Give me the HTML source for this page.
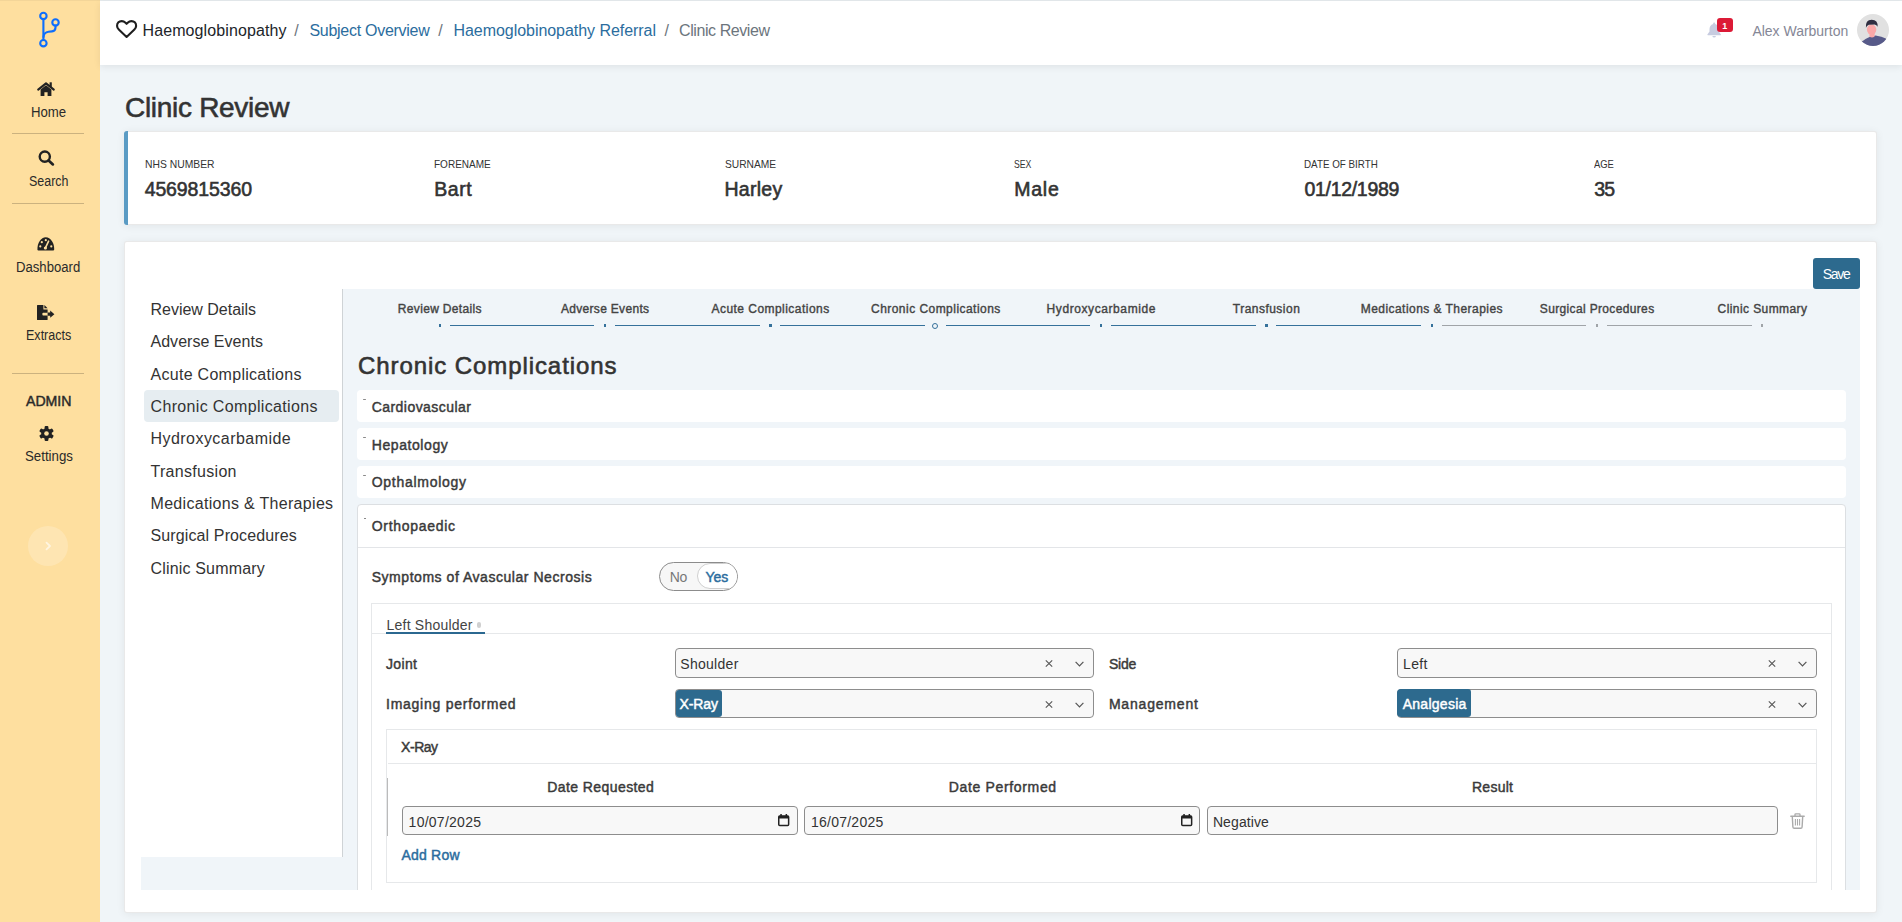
<!DOCTYPE html>
<html><head><meta charset="utf-8"><title>Clinic Review</title>
<style>
html,body{margin:0;padding:0;}
html{background:#f0f5f8;}
body{width:1902px;height:922px;overflow:hidden;position:relative;background:#f0f5f8;font-family:"Liberation Sans", sans-serif;}
.t{position:absolute;white-space:nowrap;}
svg{position:absolute;overflow:visible;}
</style></head><body>
<div style="position:absolute;left:0px;top:0px;width:100px;height:922px;background:#fedf9f"></div>
<div style="position:absolute;left:0px;top:0px;width:1902px;height:1px;background:rgba(0,0,0,0.045)"></div>
<svg style="left:20px;top:0px" width="60" height="60" viewBox="0 0 60 60">
<g fill="none" stroke="#0d6efd" stroke-width="2.1" stroke-linecap="round">
<circle cx="23.4" cy="15.9" r="3.2"/><circle cx="35.5" cy="22.4" r="3.2"/><circle cx="23.4" cy="43.2" r="3.2"/>
<path d="M23.4 19.1 V40"/><path d="M35.5 25.6 V27.5 Q35.5 31 32 31.4 L28.5 31.8 Q23.8 32.4 23.5 37"/>
</g></svg>
<svg style="left:37.3px;top:81.8px" width="18" height="14" viewBox="0 0 18 14">
<path d="M1.2 7.6 L9 1.4 L16.8 7.6" fill="none" stroke="#222222" stroke-width="2.1" stroke-linecap="round" stroke-linejoin="round"/>
<rect x="12.6" y="0.3" width="2.2" height="4.6" fill="#222222"/>
<path d="M3.6 7.4 L9 3.2 L14.4 7.4 V14 H10.6 V10.2 H7.4 V14 H3.6 Z" fill="#222222"/>
</svg>
<svg style="left:38px;top:150.2px" width="16.4" height="15.6" viewBox="0 0 16.4 15.6">
<circle cx="6.8" cy="6.6" r="5.1" fill="none" stroke="#222222" stroke-width="2.4"/>
<path d="M10.6 10.4 L14.9 14.4" stroke="#222222" stroke-width="2.7" stroke-linecap="round"/>
</svg>
<svg style="left:37.4px;top:237.4px" width="17.6" height="13.6" viewBox="0 0 17.6 13.6">
<path d="M0.4 12.6 C0.2 5.8 4 0.2 8.8 0.2 C13.6 0.2 17.4 5.8 17.2 12.6 Q17.1 13.5 16.2 13.5 H1.4 Q0.5 13.5 0.4 12.6 Z" fill="#222222"/>
<g fill="#fedf9f"><circle cx="3.3" cy="9.4" r="1.1"/><circle cx="4.8" cy="5.2" r="1.1"/><circle cx="8.8" cy="3.2" r="1.1"/><circle cx="14.3" cy="9.4" r="1.1"/></g>
<path d="M8.2 11.3 L11.6 4.2" stroke="#fedf9f" stroke-width="1.6" stroke-linecap="round"/>
<circle cx="8.4" cy="11" r="1.6" fill="#fedf9f"/>
</svg>
<svg style="left:37.4px;top:304.7px" width="17.6" height="15.1" viewBox="0 0 17.6 15.1">
<path d="M0 0.6 Q0 0 0.6 0 H6.4 V4.4 H10.6 V7.8 H6.2 Q5.4 7.8 5.4 8.6 V9.8 Q5.4 10.6 6.2 10.6 H10.6 V14.5 Q10.6 15.1 10 15.1 H0.6 Q0 15.1 0 14.5 Z" fill="#222222"/>
<path d="M7.4 0 L10.6 3.3 H7.4 Z" fill="#222222"/>
<path d="M10.6 7.6 H13.2 V5.6 L17.4 9.2 L13.2 12.8 V10.8 H10.6 Z" fill="#222222"/>
</svg>
<svg style="left:39px;top:426.3px" width="15" height="15" viewBox="-7.5 -7.5 15 15">
<g fill="#222222"><circle r="5.3"/>
<rect x="-1.9" y="-7.4" width="3.8" height="14.8" rx="1"/>
<rect x="-1.9" y="-7.4" width="3.8" height="14.8" rx="1" transform="rotate(60)"/>
<rect x="-1.9" y="-7.4" width="3.8" height="14.8" rx="1" transform="rotate(120)"/></g>
<circle r="2.3" fill="#fedf9f"/>
</svg>
<div class="t" style="left:30.90px;top:105.00px;font-size:14px;line-height:14px;font-weight:400;color:#2a2a2a;transform:scaleX(0.9422);transform-origin:0 0">Home</div>
<div class="t" style="left:28.60px;top:174.00px;font-size:14px;line-height:14px;font-weight:400;color:#2a2a2a;transform:scaleX(0.8882);transform-origin:0 0">Search</div>
<div class="t" style="left:16.30px;top:260.00px;font-size:14px;line-height:14px;font-weight:400;color:#2a2a2a;transform:scaleX(0.9372);transform-origin:0 0">Dashboard</div>
<div class="t" style="left:26.00px;top:328.00px;font-size:14px;line-height:14px;font-weight:400;color:#2a2a2a;transform:scaleX(0.8956);transform-origin:0 0">Extracts</div>
<div class="t" style="left:25.50px;top:394.00px;font-size:14px;line-height:14px;font-weight:400;color:#2a2a2a;-webkit-text-stroke:0.45px #2a2a2a;transform:scaleX(1.0083);transform-origin:0 0">ADMIN</div>
<div class="t" style="left:24.50px;top:449.00px;font-size:14px;line-height:14px;font-weight:400;color:#2a2a2a;transform:scaleX(0.9468);transform-origin:0 0">Settings</div>
<div style="position:absolute;left:12px;top:133px;width:72px;height:1px;background:rgba(0,0,0,0.2)"></div>
<div style="position:absolute;left:12px;top:203px;width:72px;height:1px;background:rgba(0,0,0,0.2)"></div>
<div style="position:absolute;left:12px;top:373px;width:72px;height:1px;background:rgba(0,0,0,0.2)"></div>
<div style="position:absolute;left:28.2px;top:525.8px;width:40px;height:40px;border-radius:50%;background:rgba(255,255,255,0.2)"></div>
<svg style="left:44px;top:541px" width="9" height="10" viewBox="0 0 9 10"><path d="M2.5 1.6 L6 5 L2.5 8.4" fill="none" stroke="rgba(255,255,255,0.6)" stroke-width="1.8" stroke-linecap="round" stroke-linejoin="round"/></svg>
<div style="position:absolute;left:100px;top:1px;width:1802px;height:64px;background:#fff;box-shadow:0 2px 7px rgba(0,0,0,0.075)"></div>
<svg style="left:116px;top:20px" width="21.2" height="18" viewBox="0 0 21.2 18">
<path d="M10.6 16.9 L2.8 9.6 C0.6 7.5 0.5 4.2 2.4 2.3 C4 0.7 7.4 0.6 9.2 2.4 L10.6 3.8 L12 2.4 C13.8 0.6 17.2 0.7 18.8 2.3 C20.7 4.2 20.6 7.5 18.4 9.6 Z" fill="none" stroke="#1e1e1e" stroke-width="2.1" stroke-linejoin="round"/>
</svg>
<div class="t" style="left:142.50px;top:23.00px;font-size:16px;line-height:16px;font-weight:400;color:#212529;letter-spacing:0.104px">Haemoglobinopathy</div>
<div class="t" style="left:294.20px;top:23.00px;font-size:16px;line-height:16px;font-weight:400;color:#6c757d">/</div>
<div class="t" style="left:309.40px;top:23.00px;font-size:16px;line-height:16px;font-weight:400;color:#2b6d9e;letter-spacing:-0.273px">Subject Overview</div>
<div class="t" style="left:438.30px;top:23.00px;font-size:16px;line-height:16px;font-weight:400;color:#6c757d">/</div>
<div class="t" style="left:453.50px;top:23.00px;font-size:16px;line-height:16px;font-weight:400;color:#2b6d9e;letter-spacing:-0.047px">Haemoglobinopathy Referral</div>
<div class="t" style="left:664.50px;top:23.00px;font-size:16px;line-height:16px;font-weight:400;color:#6c757d">/</div>
<div class="t" style="left:679.00px;top:23.00px;font-size:16px;line-height:16px;font-weight:400;color:#6c757d;letter-spacing:-0.419px">Clinic Review</div>
<svg style="left:1707.4px;top:22.1px" width="14.3" height="15.7" viewBox="0 0 14.3 15.7">
<path d="M7.15 0.6 C7.9 0.6 8.2 1.2 8.2 1.9 C10.6 2.5 11.8 4.6 11.8 7.2 V9.6 L13.9 12.4 Q14.2 13.1 13.4 13.2 H0.9 Q0.1 13.1 0.4 12.4 L2.5 9.6 V7.2 C2.5 4.6 3.7 2.5 6.1 1.9 C6.1 1.2 6.4 0.6 7.15 0.6 Z" fill="#c7cce0"/>
<path d="M5.3 14 H9 Q8.6 15.6 7.15 15.6 Q5.7 15.6 5.3 14 Z" fill="#c7cce0"/>
</svg>
<div style="position:absolute;left:1716.7px;top:18.2px;width:16px;height:13.7px;background:#dc1a36;border-radius:3px"></div>
<div class="t" style="left:1722.19px;top:22.00px;font-size:9px;line-height:9px;font-weight:700;color:#fff">1</div>
<div class="t" style="left:1752.40px;top:24.00px;font-size:14px;line-height:14px;font-weight:400;color:#858796;letter-spacing:-0.013px">Alex Warburton</div>
<svg style="left:1857px;top:14.2px" width="32" height="32" viewBox="0 0 32 32">
<defs><clipPath id="av"><circle cx="16" cy="16" r="16"/></clipPath></defs>
<circle cx="16" cy="16" r="16" fill="#e1e1e1"/>
<g clip-path="url(#av)">
<path d="M1 32 L5 27.6 Q9 24.4 13 22.8 L18.6 21.4 Q25 22.2 28.8 24.4 L32 30 V36 H1 Z" fill="#575a89"/>
<path d="M12.4 17 H17.6 V22.6 Q15 24.6 12.4 22.6 Z" fill="#fba8a8"/>
<ellipse cx="14.6" cy="15.6" rx="4.7" ry="5.1" fill="#fba8a8"/>
<path d="M8.9 13.8 Q8.2 5.9 14.7 5.8 Q21.1 5.9 20.6 12.8 Q19.6 10.9 17.6 10.6 L11.8 10.8 Q9.7 11.6 8.9 13.8 Z" fill="#2f2e41"/>
</g></svg>
<div class="t" style="left:125.00px;top:94.00px;font-size:28px;line-height:28px;font-weight:400;color:#333333;-webkit-text-stroke:0.58px #333333;letter-spacing:-0.296px">Clinic Review</div>
<div style="position:absolute;left:124px;top:131px;width:1752.5px;height:94px;background:#fff;border-radius:3px;border:1px solid rgba(0,0,0,0.085);box-sizing:border-box;box-shadow:0 1px 8px rgba(0,0,0,0.065)"></div>
<div style="position:absolute;left:124px;top:131px;width:4px;height:94px;background:#5a9bc4;border-radius:3px 0 0 3px"></div>
<div class="t" style="left:144.70px;top:159.00px;font-size:11px;line-height:11px;font-weight:400;color:#333;transform:scaleX(0.9398);transform-origin:0 0">NHS NUMBER</div>
<div class="t" style="left:144.70px;top:180.00px;font-size:19.5px;line-height:19.5px;font-weight:400;color:#333;-webkit-text-stroke:0.58px #333;letter-spacing:-0.128px">4569815360</div>
<div class="t" style="left:434.30px;top:159.00px;font-size:11px;line-height:11px;font-weight:400;color:#333;transform:scaleX(0.9111);transform-origin:0 0">FORENAME</div>
<div class="t" style="left:434.30px;top:180.00px;font-size:19.5px;line-height:19.5px;font-weight:400;color:#333;-webkit-text-stroke:0.58px #333;letter-spacing:0.511px">Bart</div>
<div class="t" style="left:724.50px;top:159.00px;font-size:11px;line-height:11px;font-weight:400;color:#333;transform:scaleX(0.9288);transform-origin:0 0">SURNAME</div>
<div class="t" style="left:724.50px;top:180.00px;font-size:19.5px;line-height:19.5px;font-weight:400;color:#333;-webkit-text-stroke:0.58px #333;letter-spacing:0.268px">Harley</div>
<div class="t" style="left:1014.20px;top:159.00px;font-size:11px;line-height:11px;font-weight:400;color:#333;transform:scaleX(0.7903);transform-origin:0 0">SEX</div>
<div class="t" style="left:1014.20px;top:180.00px;font-size:19.5px;line-height:19.5px;font-weight:400;color:#333;-webkit-text-stroke:0.58px #333;letter-spacing:0.773px">Male</div>
<div class="t" style="left:1304.40px;top:159.00px;font-size:11px;line-height:11px;font-weight:400;color:#333;transform:scaleX(0.8922);transform-origin:0 0">DATE OF BIRTH</div>
<div class="t" style="left:1304.40px;top:180.00px;font-size:19.5px;line-height:19.5px;font-weight:400;color:#333;-webkit-text-stroke:0.58px #333;letter-spacing:-0.290px">01/12/1989</div>
<div class="t" style="left:1594.20px;top:159.00px;font-size:11px;line-height:11px;font-weight:400;color:#333;transform:scaleX(0.8565);transform-origin:0 0">AGE</div>
<div class="t" style="left:1594.20px;top:180.00px;font-size:19.5px;line-height:19.5px;font-weight:400;color:#333;-webkit-text-stroke:0.58px #333;letter-spacing:-0.803px">35</div>
<div style="position:absolute;left:124px;top:241px;width:1752.5px;height:671.6px;background:#fff;border-radius:3px;border:1px solid rgba(0,0,0,0.085);box-sizing:border-box;box-shadow:0 1px 8px rgba(0,0,0,0.065)"></div>
<div style="position:absolute;left:1813px;top:258px;width:47px;height:31px;background:#2d6a8e;border-radius:3px"></div>
<div class="t" style="left:1822.70px;top:267.00px;font-size:14px;line-height:14px;font-weight:400;color:#fff;letter-spacing:-1.241px">Save</div>
<div style="position:absolute;left:141px;top:289px;width:1719px;height:600.5px;background:#f0f5f9"></div>
<div style="position:absolute;left:141px;top:289px;width:201px;height:567.5px;background:#fff;border-right:1px solid #cfd3d6"></div>
<div style="position:absolute;left:144.4px;top:390.2px;width:194.4px;height:31.4px;background:#e6edf1;border-radius:4px"></div>
<div class="t" style="left:150.50px;top:302.00px;font-size:16px;line-height:16px;font-weight:400;color:#333;letter-spacing:-0.016px">Review Details</div>
<div class="t" style="left:150.50px;top:334.00px;font-size:16px;line-height:16px;font-weight:400;color:#333;letter-spacing:0.026px">Adverse Events</div>
<div class="t" style="left:150.50px;top:367.00px;font-size:16px;line-height:16px;font-weight:400;color:#333;letter-spacing:0.286px">Acute Complications</div>
<div class="t" style="left:150.50px;top:399.00px;font-size:16px;line-height:16px;font-weight:400;color:#333;letter-spacing:0.347px">Chronic Complications</div>
<div class="t" style="left:150.50px;top:431.00px;font-size:16px;line-height:16px;font-weight:400;color:#333;letter-spacing:0.454px">Hydroxycarbamide</div>
<div class="t" style="left:150.50px;top:464.00px;font-size:16px;line-height:16px;font-weight:400;color:#333;letter-spacing:0.300px">Transfusion</div>
<div class="t" style="left:150.50px;top:496.00px;font-size:16px;line-height:16px;font-weight:400;color:#333;letter-spacing:0.309px">Medications &amp; Therapies</div>
<div class="t" style="left:150.50px;top:528.00px;font-size:16px;line-height:16px;font-weight:400;color:#333;letter-spacing:0.123px">Surgical Procedures</div>
<div class="t" style="left:150.50px;top:561.00px;font-size:16px;line-height:16px;font-weight:400;color:#333;letter-spacing:0.168px">Clinic Summary</div>
<div class="t" style="left:397.87px;top:303.00px;font-size:12px;line-height:12px;font-weight:400;color:#444;-webkit-text-stroke:0.39px #444;letter-spacing:0.326px">Review Details</div>
<div style="position:absolute;left:449.67px;top:324.8px;width:144.83px;height:1.5px;background:#35719b"></div>
<div class="t" style="left:560.90px;top:303.00px;font-size:12px;line-height:12px;font-weight:400;color:#444;-webkit-text-stroke:0.39px #444;letter-spacing:0.319px">Adverse Events</div>
<div style="position:absolute;left:615.0px;top:324.8px;width:144.83px;height:1.5px;background:#35719b"></div>
<div class="t" style="left:711.48px;top:303.00px;font-size:12px;line-height:12px;font-weight:400;color:#444;-webkit-text-stroke:0.39px #444;letter-spacing:0.462px">Acute Complications</div>
<div style="position:absolute;left:780.33px;top:324.8px;width:144.83px;height:1.5px;background:#35719b"></div>
<div class="t" style="left:871.01px;top:303.00px;font-size:12px;line-height:12px;font-weight:400;color:#444;-webkit-text-stroke:0.39px #444;letter-spacing:0.463px">Chronic Complications</div>
<div style="position:absolute;left:945.6600000000001px;top:324.8px;width:144.83px;height:1.5px;background:#35719b"></div>
<div class="t" style="left:1046.54px;top:303.00px;font-size:12px;line-height:12px;font-weight:400;color:#444;-webkit-text-stroke:0.39px #444;letter-spacing:0.590px">Hydroxycarbamide</div>
<div style="position:absolute;left:1110.99px;top:324.8px;width:144.83px;height:1.5px;background:#35719b"></div>
<div class="t" style="left:1232.82px;top:303.00px;font-size:12px;line-height:12px;font-weight:400;color:#444;-webkit-text-stroke:0.39px #444;letter-spacing:0.475px">Transfusion</div>
<div style="position:absolute;left:1276.3200000000002px;top:324.8px;width:144.83px;height:1.5px;background:#35719b"></div>
<div class="t" style="left:1360.70px;top:303.00px;font-size:12px;line-height:12px;font-weight:400;color:#444;-webkit-text-stroke:0.39px #444;letter-spacing:0.456px">Medications &amp; Therapies</div>
<div style="position:absolute;left:1441.65px;top:324.8px;width:144.83px;height:1.5px;background:#a0a4a8"></div>
<div class="t" style="left:1539.83px;top:303.00px;font-size:12px;line-height:12px;font-weight:400;color:#444;-webkit-text-stroke:0.39px #444;letter-spacing:0.347px">Surgical Procedures</div>
<div style="position:absolute;left:1606.9800000000002px;top:324.8px;width:144.83px;height:1.5px;background:#a0a4a8"></div>
<div class="t" style="left:1717.61px;top:303.00px;font-size:12px;line-height:12px;font-weight:400;color:#444;-webkit-text-stroke:0.39px #444;letter-spacing:0.414px">Clinic Summary</div>
<div style="position:absolute;left:438.67px;top:324.3px;width:2.2px;height:2.4px;background:#35719b"></div>
<div style="position:absolute;left:604.0px;top:324.3px;width:2.2px;height:2.4px;background:#35719b"></div>
<div style="position:absolute;left:769.33px;top:324.3px;width:2.2px;height:2.4px;background:#35719b"></div>
<div style="position:absolute;left:932.2600000000001px;top:322.5px;width:6px;height:6px;border:1.2px solid #35719b;border-radius:50%;box-sizing:border-box"></div>
<div style="position:absolute;left:1099.99px;top:324.3px;width:2.2px;height:2.4px;background:#35719b"></div>
<div style="position:absolute;left:1265.3200000000002px;top:324.3px;width:2.2px;height:2.4px;background:#35719b"></div>
<div style="position:absolute;left:1430.65px;top:324.3px;width:2.2px;height:2.4px;background:#35719b"></div>
<div style="position:absolute;left:1595.9800000000002px;top:324.3px;width:2.2px;height:2.4px;background:#a0a4a8"></div>
<div style="position:absolute;left:1761.3100000000002px;top:324.3px;width:2.2px;height:2.4px;background:#a0a4a8"></div>
<div class="t" style="left:358.10px;top:354.00px;font-size:24px;line-height:24px;font-weight:400;color:#333;letter-spacing:0.915px;-webkit-text-stroke:0.6px #333">Chronic Complications</div>
<div style="position:absolute;left:357px;top:390.2px;width:1488.5px;height:31.8px;background:#fff;border-radius:4px"></div>
<div class="t" style="left:371.70px;top:400.00px;font-size:14px;line-height:14px;font-weight:400;color:#3a3a3a;-webkit-text-stroke:0.45px #3a3a3a;letter-spacing:0.456px">Cardiovascular</div>
<div style="position:absolute;left:363.4px;top:398.59999999999997px;width:2.8px;height:1.9px;background:#8a8a8a;border-radius:1px"></div>
<div style="position:absolute;left:357px;top:428.1px;width:1488.5px;height:31.8px;background:#fff;border-radius:4px"></div>
<div class="t" style="left:371.70px;top:438.00px;font-size:14px;line-height:14px;font-weight:400;color:#3a3a3a;-webkit-text-stroke:0.45px #3a3a3a;letter-spacing:0.586px">Hepatology</div>
<div style="position:absolute;left:363.4px;top:436.5px;width:2.8px;height:1.9px;background:#8a8a8a;border-radius:1px"></div>
<div style="position:absolute;left:357px;top:466.1px;width:1488.5px;height:31.8px;background:#fff;border-radius:4px"></div>
<div class="t" style="left:371.70px;top:475.00px;font-size:14px;line-height:14px;font-weight:400;color:#3a3a3a;-webkit-text-stroke:0.45px #3a3a3a;letter-spacing:0.719px">Opthalmology</div>
<div style="position:absolute;left:363.4px;top:474.5px;width:2.8px;height:1.9px;background:#8a8a8a;border-radius:1px"></div>
<div style="position:absolute;left:141px;top:289px;width:1719px;height:600.5px;overflow:hidden">
<div style="position:absolute;left:-141px;top:-289px;width:1902px;height:922px">
<div style="position:absolute;left:357px;top:504.2px;width:1488.5px;height:500px;background:#fff;border:1px solid #dcdfe2;border-radius:4px;box-sizing:border-box"></div>
<div style="position:absolute;left:358px;top:546.7px;width:1486.5px;height:1px;background:#e3e5e8"></div>
<div style="position:absolute;left:363.8px;top:517.6px;width:2.6px;height:1.2px;background:#888"></div>
<div class="t" style="left:371.70px;top:519.00px;font-size:14px;line-height:14px;font-weight:400;color:#3a3a3a;-webkit-text-stroke:0.45px #3a3a3a;letter-spacing:0.712px">Orthopaedic</div>
<div class="t" style="left:371.70px;top:570.00px;font-size:14px;line-height:14px;font-weight:400;color:#3a3a3a;-webkit-text-stroke:0.45px #3a3a3a;letter-spacing:0.539px">Symptoms of Avascular Necrosis</div>
<div style="position:absolute;left:659.2px;top:562px;width:78.6px;height:28.6px;background:#f7f7f7;border:1.3px solid #8c8c8c;border-radius:15px;box-sizing:border-box;overflow:hidden"><div style="position:absolute;left:37px;top:0px;width:50px;height:26px;background:#fff;border:1px solid #cfcfcf;border-radius:13px;box-sizing:border-box"></div></div>
<div class="t" style="left:669.70px;top:570.00px;font-size:14px;line-height:14px;font-weight:400;color:#777;letter-spacing:-0.306px">No</div>
<div class="t" style="left:705.60px;top:570.00px;font-size:14px;line-height:14px;font-weight:400;color:#2b6d9e;-webkit-text-stroke:0.45px #2b6d9e;letter-spacing:-0.072px">Yes</div>
<div style="position:absolute;left:371px;top:603.2px;width:1461.2px;height:400px;border:1px solid #e6e8ea;box-sizing:border-box"></div>
<div style="position:absolute;left:372px;top:633px;width:1458.5px;height:1px;background:#e6e8ea"></div>
<div class="t" style="left:386.50px;top:618.00px;font-size:14px;line-height:14px;font-weight:400;color:#444;letter-spacing:0.225px">Left Shoulder</div>
<div style="position:absolute;left:477.4px;top:622px;width:3.9px;height:5.8px;background:#d0d0d0;border-radius:2px"></div>
<div style="position:absolute;left:385.9px;top:631.8px;width:99.1px;height:2.2px;background:#2b6890"></div>
<div class="t" style="left:386.00px;top:657.00px;font-size:14px;line-height:14px;font-weight:400;color:#3a3a3a;-webkit-text-stroke:0.45px #3a3a3a;letter-spacing:0.355px">Joint</div>
<div class="t" style="left:1108.90px;top:657.00px;font-size:14px;line-height:14px;font-weight:400;color:#3a3a3a;-webkit-text-stroke:0.45px #3a3a3a;letter-spacing:-0.210px">Side</div>
<div class="t" style="left:386.00px;top:697.00px;font-size:14px;line-height:14px;font-weight:400;color:#3a3a3a;-webkit-text-stroke:0.45px #3a3a3a;letter-spacing:0.749px">Imaging performed</div>
<div class="t" style="left:1108.90px;top:697.00px;font-size:14px;line-height:14px;font-weight:400;color:#3a3a3a;-webkit-text-stroke:0.45px #3a3a3a;letter-spacing:0.809px">Management</div>
<div style="position:absolute;left:674.5px;top:648.2px;width:419.0999999999999px;height:29.399999999999977px;background:#f8f8f8;border:1.2px solid #8d8d8d;border-radius:4px;box-sizing:border-box"></div>
<svg style="left:1045.2px;top:660.2px" width="8" height="7" viewBox="0 0 8 7"><path d="M0.8 0.4 L7.2 6.6 M7.2 0.4 L0.8 6.6" stroke="#555" stroke-width="1.1"/></svg>
<svg style="left:1075.0px;top:660.6px" width="9" height="6" viewBox="0 0 9 6"><path d="M0.6 0.8 L4.5 4.8 L8.4 0.8" fill="none" stroke="#555" stroke-width="1.2"/></svg>
<div style="position:absolute;left:1397.1px;top:648.2px;width:419.5px;height:29.399999999999977px;background:#f8f8f8;border:1.2px solid #8d8d8d;border-radius:4px;box-sizing:border-box"></div>
<svg style="left:1768.2px;top:660.2px" width="8" height="7" viewBox="0 0 8 7"><path d="M0.8 0.4 L7.2 6.6 M7.2 0.4 L0.8 6.6" stroke="#555" stroke-width="1.1"/></svg>
<svg style="left:1798.0px;top:660.6px" width="9" height="6" viewBox="0 0 9 6"><path d="M0.6 0.8 L4.5 4.8 L8.4 0.8" fill="none" stroke="#555" stroke-width="1.2"/></svg>
<div style="position:absolute;left:674.5px;top:689.2px;width:419.0999999999999px;height:28.59999999999991px;background:#f8f8f8;border:1.2px solid #8d8d8d;border-radius:4px;box-sizing:border-box"></div>
<svg style="left:1045.2px;top:701.2px" width="8" height="7" viewBox="0 0 8 7"><path d="M0.8 0.4 L7.2 6.6 M7.2 0.4 L0.8 6.6" stroke="#555" stroke-width="1.1"/></svg>
<svg style="left:1075.0px;top:701.6px" width="9" height="6" viewBox="0 0 9 6"><path d="M0.6 0.8 L4.5 4.8 L8.4 0.8" fill="none" stroke="#555" stroke-width="1.2"/></svg>
<div style="position:absolute;left:1397.1px;top:689.2px;width:419.5px;height:28.59999999999991px;background:#f8f8f8;border:1.2px solid #8d8d8d;border-radius:4px;box-sizing:border-box"></div>
<svg style="left:1768.2px;top:701.2px" width="8" height="7" viewBox="0 0 8 7"><path d="M0.8 0.4 L7.2 6.6 M7.2 0.4 L0.8 6.6" stroke="#555" stroke-width="1.1"/></svg>
<svg style="left:1798.0px;top:701.6px" width="9" height="6" viewBox="0 0 9 6"><path d="M0.6 0.8 L4.5 4.8 L8.4 0.8" fill="none" stroke="#555" stroke-width="1.2"/></svg>
<div class="t" style="left:680.30px;top:657.00px;font-size:14px;line-height:14px;font-weight:400;color:#333;letter-spacing:0.279px">Shoulder</div>
<div class="t" style="left:1403.00px;top:657.00px;font-size:14px;line-height:14px;font-weight:400;color:#333;letter-spacing:0.380px">Left</div>
<div style="position:absolute;left:676px;top:689.6px;width:45.8px;height:27.8px;background:#2d6a8e;border-radius:3px"></div>
<div class="t" style="left:679.50px;top:697.00px;font-size:14px;line-height:14px;font-weight:400;color:#fff;-webkit-text-stroke:0.45px #fff;letter-spacing:-0.102px">X-Ray</div>
<div style="position:absolute;left:1397.2px;top:689.4px;width:73.6px;height:28px;background:#2d6a8e;border-radius:4px 3px 3px 4px"></div>
<div class="t" style="left:1402.70px;top:697.00px;font-size:14px;line-height:14px;font-weight:400;color:#fff;-webkit-text-stroke:0.45px #fff;letter-spacing:0.275px">Analgesia</div>
<div style="position:absolute;left:386px;top:729.2px;width:1430.7px;height:154px;border:1px solid #e6e8ea;box-sizing:border-box"></div>
<div style="position:absolute;left:387.6px;top:763px;width:1428px;height:1px;background:#e6e8ea"></div>
<div class="t" style="left:401.10px;top:740.00px;font-size:14px;line-height:14px;font-weight:400;color:#3a3a3a;-webkit-text-stroke:0.45px #3a3a3a;letter-spacing:-0.477px">X-Ray</div>
<div style="position:absolute;left:387px;top:778px;width:1.2px;height:57.6px;background:#bbb"></div>
<div class="t" style="left:547.35px;top:780.00px;font-size:14px;line-height:14px;font-weight:400;color:#3a3a3a;-webkit-text-stroke:0.45px #3a3a3a;letter-spacing:0.409px">Date Requested</div>
<div class="t" style="left:948.85px;top:780.00px;font-size:14px;line-height:14px;font-weight:400;color:#3a3a3a;-webkit-text-stroke:0.45px #3a3a3a;letter-spacing:0.652px">Date Performed</div>
<div class="t" style="left:1472.00px;top:780.00px;font-size:14px;line-height:14px;font-weight:400;color:#3a3a3a;-webkit-text-stroke:0.45px #3a3a3a;letter-spacing:0.263px">Result</div>
<div style="position:absolute;left:402.4px;top:806.2px;width:396.0px;height:29.3px;background:#f8f8f8;border:1.2px solid #8d8d8d;border-radius:4px;box-sizing:border-box"></div>
<div style="position:absolute;left:804.3px;top:806.2px;width:396.10000000000014px;height:29.3px;background:#f8f8f8;border:1.2px solid #8d8d8d;border-radius:4px;box-sizing:border-box"></div>
<div style="position:absolute;left:1207.2px;top:806.2px;width:570.5px;height:29.3px;background:#f8f8f8;border:1.2px solid #8d8d8d;border-radius:4px;box-sizing:border-box"></div>
<svg style="left:778.3px;top:814.3px" width="11.4" height="12.2" viewBox="0 0 11.4 12.2">
<rect x="0.75" y="1.9" width="9.9" height="9.55" rx="1" fill="none" stroke="#222" stroke-width="1.5"/>
<rect x="0.75" y="1.9" width="9.9" height="2.6" fill="#222"/>
<rect x="2.3" y="0" width="1.5" height="2.5" fill="#222"/><rect x="7.6" y="0" width="1.5" height="2.5" fill="#222"/>
</svg>
<svg style="left:1181.3px;top:814.3px" width="11.4" height="12.2" viewBox="0 0 11.4 12.2">
<rect x="0.75" y="1.9" width="9.9" height="9.55" rx="1" fill="none" stroke="#222" stroke-width="1.5"/>
<rect x="0.75" y="1.9" width="9.9" height="2.6" fill="#222"/>
<rect x="2.3" y="0" width="1.5" height="2.5" fill="#222"/><rect x="7.6" y="0" width="1.5" height="2.5" fill="#222"/>
</svg>
<div class="t" style="left:408.60px;top:815.00px;font-size:14px;line-height:14px;font-weight:400;color:#333;letter-spacing:0.258px">10/07/2025</div>
<div class="t" style="left:810.90px;top:815.00px;font-size:14px;line-height:14px;font-weight:400;color:#333;letter-spacing:0.258px">16/07/2025</div>
<div class="t" style="left:1212.90px;top:815.00px;font-size:14px;line-height:14px;font-weight:400;color:#333;letter-spacing:0.105px">Negative</div>
<svg style="left:1789.9px;top:812.9px" width="15" height="16" viewBox="0 0 15 16">
<path d="M0.8 3.3 H14.2" stroke="#aaa" stroke-width="1.4" stroke-linecap="round"/>
<path d="M5 3 V1.6 Q5 0.8 5.8 0.8 H9.2 Q10 0.8 10 1.6 V3" fill="none" stroke="#aaa" stroke-width="1.3"/>
<path d="M2.3 3.6 L2.9 14 Q3 15.2 4.2 15.2 H10.8 Q12 15.2 12.1 14 L12.7 3.6" fill="none" stroke="#aaa" stroke-width="1.4"/>
<path d="M5.4 6 V12.6 M7.5 6 V12.6 M9.6 6 V12.6" stroke="#aaa" stroke-width="1.1"/>
</svg>
<div class="t" style="left:401.50px;top:848.00px;font-size:14px;line-height:14px;font-weight:400;color:#2b6d9e;-webkit-text-stroke:0.45px #2b6d9e;letter-spacing:0.198px">Add Row</div>
</div></div>
</body></html>
